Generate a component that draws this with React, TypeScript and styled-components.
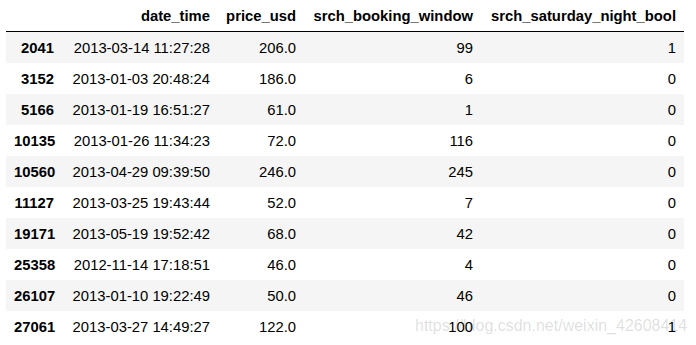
import styled, { createGlobalStyle } from "styled-components";

const GlobalStyle = createGlobalStyle`
  html, body {
    margin: 0;
    padding: 0;
    background: #fff;
  }
`;

type Row = {
  index: number;
  dateTime: string;
  price: string;
  bookingWindow: number;
  saturdayNight: number;
};

const ROWS: Row[] = [
  { index: 2041, dateTime: "2013-03-14 11:27:28", price: "206.0", bookingWindow: 99, saturdayNight: 1 },
  { index: 3152, dateTime: "2013-01-03 20:48:24", price: "186.0", bookingWindow: 6, saturdayNight: 0 },
  { index: 5166, dateTime: "2013-01-19 16:51:27", price: "61.0", bookingWindow: 1, saturdayNight: 0 },
  { index: 10135, dateTime: "2013-01-26 11:34:23", price: "72.0", bookingWindow: 116, saturdayNight: 0 },
  { index: 10560, dateTime: "2013-04-29 09:39:50", price: "246.0", bookingWindow: 245, saturdayNight: 0 },
  { index: 11127, dateTime: "2013-03-25 19:43:44", price: "52.0", bookingWindow: 7, saturdayNight: 0 },
  { index: 19171, dateTime: "2013-05-19 19:52:42", price: "68.0", bookingWindow: 42, saturdayNight: 0 },
  { index: 25358, dateTime: "2012-11-14 17:18:51", price: "46.0", bookingWindow: 4, saturdayNight: 0 },
  { index: 26107, dateTime: "2013-01-10 19:22:49", price: "50.0", bookingWindow: 46, saturdayNight: 0 },
  { index: 27061, dateTime: "2013-03-27 14:49:27", price: "122.0", bookingWindow: 100, saturdayNight: 1 },
];

const COLUMNS = ["date_time", "price_usd", "srch_booking_window", "srch_saturday_night_bool"];
const COL_WIDTHS = [56, 156, 86, 177, 203];

const Page = styled.div`
  position: relative;
  width: 696px;
  height: 345px;
  padding: 0 0 0 6px;
  box-sizing: border-box;
  font-family: "Liberation Sans", Arial, sans-serif;
  color: #000;
`;

const DataFrame = styled.table`
  border-collapse: collapse;
  border-spacing: 0;
  table-layout: fixed;
  width: 678px;
  font-size: 14.8px;
`;

const HeaderRow = styled.tr`
  border-bottom: 1px solid #000;
`;

const HeaderCell = styled.th`
  height: 31px;
  padding: 0 8px;
  text-align: right;
  vertical-align: middle;
  font-weight: bold;
  white-space: nowrap;
  line-height: 16px;
`;

const BodyRow = styled.tr<{ striped: boolean }>`
  background: ${(props) => (props.striped ? "#f5f5f5" : "transparent")};
`;

const IndexCell = styled.th`
  height: 31px;
  padding: 0 8px;
  text-align: right;
  vertical-align: middle;
  font-weight: bold;
  line-height: 16px;
`;

const DataCell = styled.td`
  height: 31px;
  padding: 0 8px;
  text-align: right;
  vertical-align: middle;
  white-space: nowrap;
  line-height: 16px;
`;

const Watermark = styled.div`
  position: absolute;
  left: 415px;
  top: 318px;
  font-family: "Liberation Sans", Arial, sans-serif;
  font-size: 16px;
  line-height: 16px;
  color: rgba(0, 0, 0, 0.14);
  white-space: nowrap;
  pointer-events: none;
`;

const App = () => {
  return (
    <>
      <GlobalStyle />
      <Page>
        <DataFrame>
          <colgroup>
            {COL_WIDTHS.map((w, i) => (
              <col key={i} style={{ width: w }} />
            ))}
          </colgroup>
          <thead>
            <HeaderRow>
              <HeaderCell />
              {COLUMNS.map((name) => (
                <HeaderCell key={name}>{name}</HeaderCell>
              ))}
            </HeaderRow>
          </thead>
          <tbody>
            {ROWS.map((row, i) => (
              <BodyRow key={row.index} striped={i % 2 === 0}>
                <IndexCell>{row.index}</IndexCell>
                <DataCell>{row.dateTime}</DataCell>
                <DataCell>{row.price}</DataCell>
                <DataCell>{row.bookingWindow}</DataCell>
                <DataCell>{row.saturdayNight}</DataCell>
              </BodyRow>
            ))}
          </tbody>
        </DataFrame>
        <Watermark>https://blog.csdn.net/weixin_42608414</Watermark>
      </Page>
    </>
  );
};

export default App;
